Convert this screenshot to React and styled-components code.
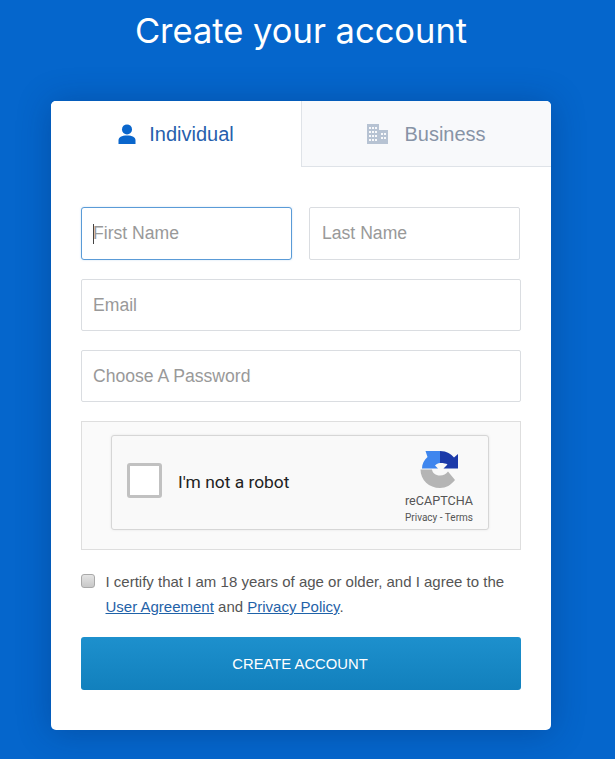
import React from "react";
import styled, { createGlobalStyle } from "styled-components";

const Global = createGlobalStyle`
  html, body { margin: 0; padding: 0; background: #0566cc; }
  body { font-family: "Liberation Sans", Arial, sans-serif; overflow: hidden; }
  * { box-sizing: border-box; }
`;
const Page = styled.div`
  width: 602px;
  height: 759px;
  display: flex;
  flex-direction: column;
  align-items: center;
`;
const Title = styled.h1`
  margin: 0;
  height: 101px;
  padding-top: 9px;
  font: 400 34.5px/44px "Inter", sans-serif;
  color: #fff;
`;
const Card = styled.main`
  width: 500px;
  height: 629px;
  background: #fff;
  border-radius: 5px;
  box-shadow: 0 2px 34px rgba(0, 30, 80, 0.3);
  overflow: hidden;
`;
const Tabs = styled.div`
  display: flex;
  height: 66px;
`;
const Tab = styled.div`
  flex: 0 0 250px;
  display: flex;
  align-items: center;
  justify-content: center;
  gap: ${(p) => (p.$active ? "13px" : "16px")};
  font-size: 20px;
  padding: ${(p) => (p.$active ? "0" : "1px 0 0 0")};
  color: ${(p) => (p.$active ? "#2660ad" : "#8793a6")};
  background: ${(p) => (p.$active ? "#fff" : "#f8f9fb")};
  border-left: ${(p) => (p.$active ? "none" : "1px solid #dfe3e8")};
  border-bottom: ${(p) => (p.$active ? "none" : "1px solid #dfe3e8")};
`;
const Form = styled.form`
  padding: 40px 30px 40px;
  display: flex;
  flex-direction: column;
`;
const NameRow = styled.div`
  display: flex;
  gap: 17px;
  width: 439px;
  margin-bottom: 19px;
`;
const Field = styled.div`
  position: relative;
`;
const Caret = styled.span`
  position: absolute;
  left: 12px;
  top: 17px;
  width: 1px;
  height: 20px;
  background: #444;
`;
const Input = styled.input`
  display: block;
  width: 440px;
  height: 52px;
  margin-bottom: 19px;
  border: 1px solid #dadde1;
  border-radius: 2px;
  padding: 0 11px;
  font: 400 17.6px "Liberation Sans", Arial, sans-serif;
  color: #333;
  background: #fff;
  outline: none;
  &::placeholder { color: #999; opacity: 1; }
`;
const HalfInput = styled(Input)`
  width: 211px;
  height: 53px;
  margin-bottom: 0;
  padding: 0 12px;
`;
const FocusedInput = styled(HalfInput)`
  padding: 0 11px;
  border-radius: 3px;
  &&, &&:focus {
    border: 1px solid rgb(90, 155, 215);
    box-shadow: 0 0 2px rgba(90, 155, 215, 0.35);
  }
`;
const CaptchaWrap = styled.div`
  width: 440px;
  height: 129px;
  background: #fafafa;
  border: 1px solid #dedede;
  padding: 13px 0 0 29px;
  margin-bottom: 19px;
`;
const Captcha = styled.div`
  width: 378px;
  height: 95px;
  background: #f9f9f9;
  border: 1px solid #d6d6d6;
  border-radius: 3px;
  box-shadow: 0 0 3px rgba(0, 0, 0, 0.08);
  display: flex;
  align-items: center;
  padding-left: 15px;
`;
const RobotBox = styled.span`
  width: 35px;
  height: 35px;
  margin-bottom: 5px;
  background: #fff;
  border: 3px solid #c1c1c1;
  border-radius: 3px;
  flex: none;
`;
const RobotLabel = styled.span`
  margin: 0 0 2px 16px;
  font: 400 17.4px "Roboto", sans-serif;
  color: #222;
  flex: 1;
`;
const Brand = styled.div`
  width: 72px;
  margin-right: 13px;
  display: flex;
  flex-direction: column;
  align-items: center;
  color: #555;
  padding-top: 10px;
`;
const BrandName = styled.span`
  font: 400 12.6px/16px "Roboto", sans-serif;
  margin-top: 4px;
`;
const BrandLinks = styled.span`
  font: 400 10px/14px "Roboto", sans-serif;
  margin-top: 2px;
  white-space: nowrap;
`;
const Agree = styled.label`
  display: flex;
  gap: 10.5px;
  font-size: 15px;
  line-height: 25px;
  color: #555;
  margin-bottom: 18px;
`;
const Check = styled.span`
  width: 14px;
  height: 14px;
  margin-top: 5px;
  flex: none;
  background: linear-gradient(#e4e4e4, #c8c8c8);
  border: 1px solid #a9a9a9;
  border-radius: 3px;
`;
const TextLink = styled.a`
  color: #1f62a8;
  text-decoration: underline;
`;
const Submit = styled.button`
  width: 440px;
  height: 53px;
  border: none;
  border-radius: 3px;
  padding: 0 2px 0 0;
  background: linear-gradient(#1d90cd, #1280bd);
  color: #fff;
  font: 400 14.8px "Liberation Sans", Arial, sans-serif;
  text-transform: uppercase;
`;

const PersonIcon = () => (
  <svg width="18" height="20" viewBox="0 0 18 20" aria-hidden="true">
    <circle cx="9" cy="5.4" r="5" fill="#0a66cc" />
    <path d="M0.5 20 V16.4 C0.5 13.2 3.600 11.600 9 11.600 C14.400 11.600 17.500 13.200 17.500 16.400 V20 Z" fill="#0a66cc" />
  </svg>
);
const BuildingIcon = () => (
  <svg width="21" height="20" viewBox="0 0 21 20" aria-hidden="true">
    <path fillRule="evenodd" fill="#b7c3d3" d="M0 0 H12 V6 H21 V20 H0 Z M2 3 V5 H4 V3 Z M5 3 V5 H7 V3 Z M8 3 V5 H10 V3 Z M2 7 V9 H4 V7 Z M5 7 V9 H7 V7 Z M8 7 V9 H10 V7 Z M2 11 V13 H4 V11 Z M5 11 V13 H7 V11 Z M8 11 V13 H10 V11 Z M2 15 V17 H4 V15 Z M5 15 V17 H7 V15 Z M8 15 V17 H10 V15 Z M14 9 V11 H16 V9 Z M17 9 V11 H19 V9 Z M14 13 V15 H16 V13 Z M17 13 V15 H19 V13 Z" />
  </svg>
);
const RecaptchaIcon = () => (
  <svg width="38" height="38" viewBox="0 0 38 38" aria-hidden="true">
    <path fill="#b5b5b5" d="M0.500 18.500 H12 C12.500 22 15.500 24.500 20 24.500 C23.500 24.500 26 23 28 20.500 L35 29 C31 34 26 37 20 37 C9 37 0.500 29 0.500 18.500 Z" />
    <path fill="#3f86ee" d="M20 0 V12 C18 12 16.500 13 15 14.500 L18 17.500 H2 C2 13 4 9 7.500 6 L5.500 0 Z" />
    <path fill="#1c3aa9" d="M20 0 C27 0 31 3 34 6.500 L38 3 V17.500 H23.500 L27.500 13.500 C26 12.500 24 12 20 12 Z" />
  </svg>
);

export default function App() {
  return (
    <>
      <Global />
      <Page>
        <Title>Create your account</Title>
        <Card>
          <Tabs>
            <Tab $active>
              <PersonIcon />
              Individual
            </Tab>
            <Tab>
              <BuildingIcon />
              Business
            </Tab>
          </Tabs>
          <Form>
            <NameRow>
              <Field>
                <FocusedInput placeholder="First Name" />
                <Caret />
              </Field>
              <HalfInput placeholder="Last Name" />
            </NameRow>
            <Input placeholder="Email" />
            <Input placeholder="Choose A Password" />
            <CaptchaWrap>
              <Captcha>
                <RobotBox />
                <RobotLabel>I'm not a robot</RobotLabel>
                <Brand>
                  <RecaptchaIcon />
                  <BrandName>reCAPTCHA</BrandName>
                  <BrandLinks>Privacy - Terms</BrandLinks>
                </Brand>
              </Captcha>
            </CaptchaWrap>
            <Agree>
              <Check />
              <span>
                I certify that I am 18 years of age or older, and I agree to the{" "}
                <TextLink href="#">User Agreement</TextLink> and{" "}
                <TextLink href="#">Privacy Policy</TextLink>.
              </span>
            </Agree>
            <Submit type="button">Create Account</Submit>
          </Form>
        </Card>
      </Page>
    </>
  );
}
